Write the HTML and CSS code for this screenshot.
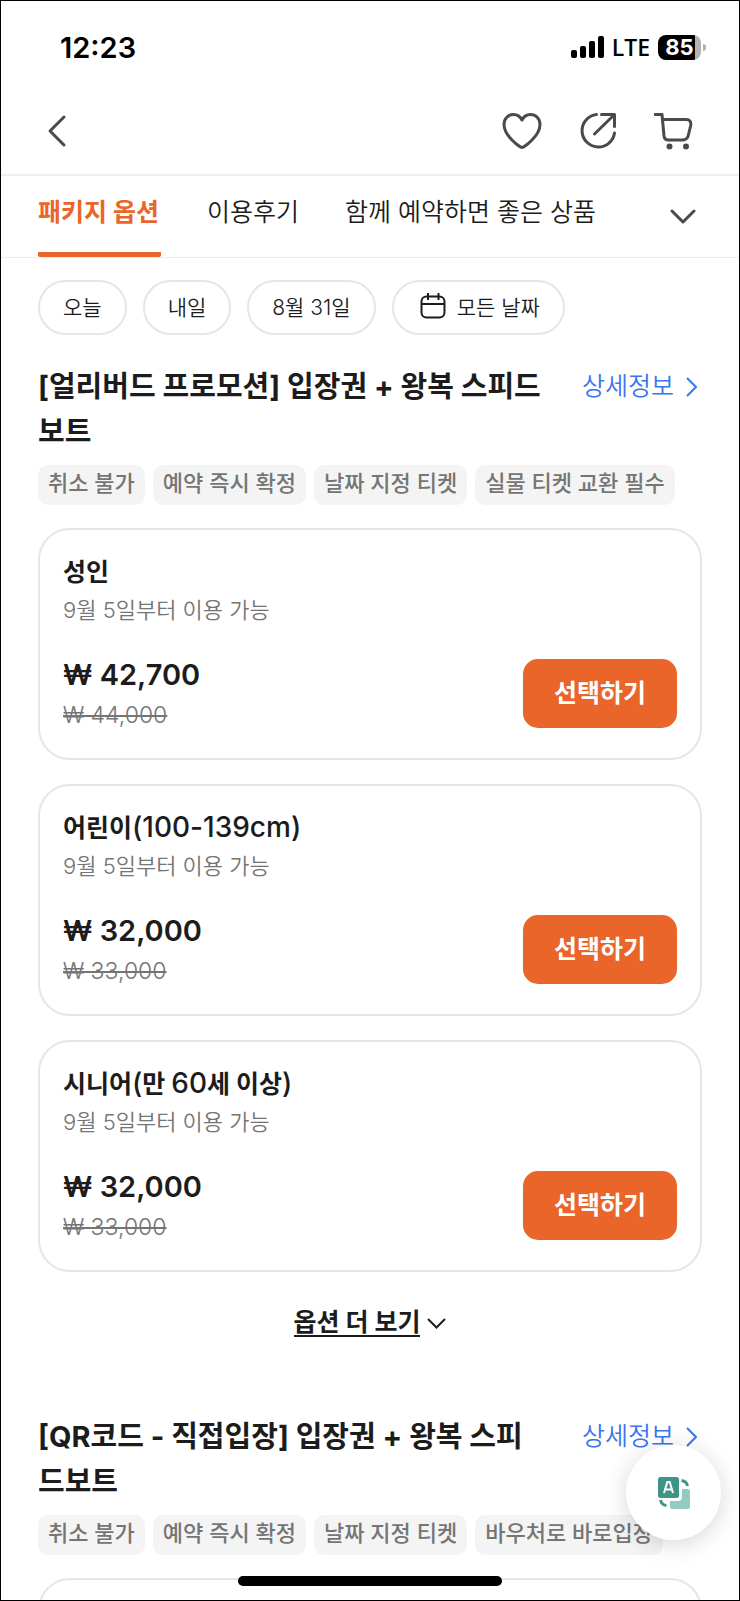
FILE: index.html
```html
<!DOCTYPE html>
<html lang="ko">
<head>
    <meta charset="UTF-8">
    <meta name="viewport" content="width=device-width, initial-scale=1"/>
    <title>패키지 옵션</title>
    <link rel="stylesheet" href="styles.css">
</head>
<body>
<div class="app">
    <div class="status">
        <span class="clock">12:23</span>
        <div class="signals">
            <svg class="bars" width="33" height="22" viewBox="0 0 33 22">
                <rect x="0" y="14" width="6" height="8" rx="2"/>
                <rect x="9" y="10" width="6" height="12" rx="2"/>
                <rect x="18" y="5" width="6" height="17" rx="2"/>
                <rect x="27" y="0" width="6" height="22" rx="2"/>
            </svg>
            <span class="network">LTE</span>
            <span class="battery">85</span>
        </div>
    </div>

    <header class="topbar">
        <button class="icon" aria-label="뒤로">
            <svg width="20" height="34" viewBox="0 0 20 34"><path d="M17 3 3 17l14 14"/></svg>
        </button>
        <div class="actions">
            <button class="icon" aria-label="찜하기">
                <svg width="40" height="38" viewBox="0 0 40 38"><path d="M20 35.500C18 35.500 2 24 2 12.500C2 6.500 6.300 2.500 11.500 2.500C15.500 2.500 18.500 5 20 8C21.500 5 24.500 2.500 28.500 2.500C33.700 2.500 38 6.500 38 12.500C38 24 22 35.500 20 35.500Z"/></svg>
            </button>
            <button class="icon" aria-label="공유">
                <svg width="38" height="38" viewBox="0 0 38 38"><path d="M17.500 2.500A16.300 16.300 0 1 0 35.500 21M22.500 2.500H35.500V14.500M35 3 15.500 22"/></svg>
            </button>
            <button class="icon" aria-label="장바구니">
                <svg width="39" height="38" viewBox="0 0 39 38"><path d="M1 2.500H8L10 24Q10.500 28 14.500 28H28.500Q32.500 28 34 24.500L36.600 14Q37.800 7.500 32 7.500H8.500"/><circle class="wheel" cx="15.500" cy="34.500" r="3"/><circle class="wheel" cx="32" cy="34.500" r="3"/></svg>
            </button>
        </div>
    </header>

    <nav class="tabs">
        <a class="tab active" href="#options">패키지 옵션</a>
        <a class="tab" href="#reviews">이용후기</a>
        <a class="tab" href="#related">함께 예약하면 좋은 상품</a>
        <button class="icon more-tabs" aria-label="펼치기">
            <svg width="26" height="16" viewBox="0 0 26 16"><path d="M2 2 13 13 24 2"/></svg>
        </button>
    </nav>

    <main id="options">
        <div class="chips">
            <button class="chip">오늘</button>
            <button class="chip">내일</button>
            <button class="chip">8월 31일</button>
            <button class="chip">
                <svg width="26" height="26" viewBox="0 0 26 26"><rect x="1.500" y="3.500" width="23" height="21" rx="5"/><path d="M1.500 11H24.500M8 0V7M18.500 0V7"/></svg>
                모든 날짜
            </button>
        </div>

        <section class="package">
            <div class="heading">
                <h2>[얼리버드 프로모션] 입장권 + 왕복 스피드보트</h2>
                <a class="detail" href="#detail">상세정보
                    <svg width="11" height="20" viewBox="0 0 11 20"><path d="M1 1 10 10 1 19"/></svg>
                </a>
            </div>
            <ul class="tags">
                <li>취소 불가</li>
                <li>예약 즉시 확정</li>
                <li>날짜 지정 티켓</li>
                <li>실물 티켓 교환 필수</li>
            </ul>
            <div class="cards">
                <article class="card">
                    <h3>성인</h3>
                    <p class="when">9월 5일부터 이용 가능</p>
                    <div class="buy">
                        <div>
                            <p class="price">₩ 42,700</p>
                            <del>₩ 44,000</del>
                        </div>
                        <button class="select">선택하기</button>
                    </div>
                </article>
                <article class="card">
                    <h3>어린이<span class="latin">(100-139cm)</span></h3>
                    <p class="when">9월 5일부터 이용 가능</p>
                    <div class="buy">
                        <div>
                            <p class="price">₩ 32,000</p>
                            <del>₩ 33,000</del>
                        </div>
                        <button class="select">선택하기</button>
                    </div>
                </article>
                <article class="card">
                    <h3>시니어<span class="latin">(</span>만 <span class="latin">60</span>세 이상<span class="latin">)</span></h3>
                    <p class="when">9월 5일부터 이용 가능</p>
                    <div class="buy">
                        <div>
                            <p class="price">₩ 32,000</p>
                            <del>₩ 33,000</del>
                        </div>
                        <button class="select">선택하기</button>
                    </div>
                </article>
            </div>
            <button class="more">
                <span>옵션 더 보기</span>
                <svg width="19" height="11" viewBox="0 0 19 11"><path d="M1 1 9.500 9.500 18 1"/></svg>
            </button>
        </section>

        <section class="package">
            <div class="heading">
                <h2>[QR코드 - 직접입장] 입장권 + 왕복 스피드보트</h2>
                <a class="detail" href="#detail">상세정보
                    <svg width="11" height="20" viewBox="0 0 11 20"><path d="M1 1 10 10 1 19"/></svg>
                </a>
            </div>
            <ul class="tags">
                <li>취소 불가</li>
                <li>예약 즉시 확정</li>
                <li>날짜 지정 티켓</li>
                <li>바우처로 바로입장</li>
            </ul>
            <div class="cards">
                <article class="card"></article>
            </div>
        </section>
    </main>

    <button class="translate" aria-label="번역">
        <svg width="32" height="32" viewBox="0 0 32 32">
            <path class="sheet" d="M24 12H29.500Q32 12 32 14.500V29.500Q32 32 29.500 32H14.500Q12 32 12 29.500V24H20Q24 24 24 20Z"/>
            <rect class="page" x="0" y="0" width="21" height="21" rx="2.500"/>
            <path class="letter" d="M6 16 9.300 5H11.700L15 16M7.500 12.500H13.500"/>
            <path class="turn" d="M23.500 3.500Q28.500 4 29.500 9M2.500 23Q3.500 28 8.500 28.500"/>
        </svg>
    </button>
    <div class="home"></div>
</div>
</body>
</html>
```
FILE: styles.css
```css
* {
    box-sizing: border-box;
    margin: 0;
    padding: 0;
}

body {
    background-color: white;
    color: #1c1c1c;
    font-family: Inter, "Noto Sans CJK KR", sans-serif;
}

button {
    border: none;
    background: none;
    color: inherit;
    font: inherit;
    cursor: pointer;
}

a {
    color: inherit;
    text-decoration: none;
}

svg {
    display: block;
    flex: none;
    fill: none;
    stroke: currentColor;
}

.app {
    position: relative;
    display: flex;
    flex-direction: column;
    height: 100vh;
    overflow: hidden;
    border: 1px solid black;
}

main {
    flex: 1;
    min-height: 0;
    overflow: hidden;
}

/* status bar */
.status {
    display: flex;
    flex: none;
    justify-content: space-between;
    align-items: center;
    height: 92px;
    padding: 0 33px 0 59px;
    color: black;
}

.clock {
    font-size: 29px;
    font-weight: 600;
}

.signals {
    display: flex;
    align-items: center;
    gap: 8px;
}

.bars {
    fill: black;
    stroke: none;
}

.network {
    font-family: "Open Sans", sans-serif;
    font-size: 23px;
    font-weight: 600;
}

.battery {
    position: relative;
    width: 43px;
    margin-right: 5px;
    border-radius: 8px;
    background: linear-gradient(to right, black 85%, #b3b3b3 85%);
    color: white;
    font-size: 22px;
    font-weight: 700;
    line-height: 25px;
    text-align: center;
}

.battery::after {
    content: "";
    position: absolute;
    top: 9px;
    right: -5px;
    width: 3px;
    height: 7px;
    border-radius: 0 3px 3px 0;
    background-color: #b3b3b3;
}

/* navigation */
.topbar {
    display: flex;
    flex: none;
    justify-content: space-between;
    align-items: center;
    height: 83px;
    padding: 0 46px 6px;
    border-bottom: 2px solid #efefef;
}

.icon {
    color: #4a4a4a;
    stroke-width: 3;
    stroke-linecap: round;
    stroke-linejoin: round;
}

.actions {
    display: flex;
    gap: 37px;
}

.wheel {
    fill: currentColor;
    stroke: none;
}

.tabs {
    display: flex;
    flex: none;
    align-items: stretch;
    gap: 46px;
    height: 82px;
    padding: 0 43px 0 37px;
    border-bottom: 1px solid #ededed;
    font-size: 25px;
    font-weight: 350;
    line-height: 72px;
    white-space: nowrap;
}

.tab.active {
    padding-right: 2px;
    border-bottom: 5px solid #ea652a;
    border-radius: 2px;
    color: #ea652a;
    font-weight: 700;
}

.more-tabs {
    margin-left: auto;
}

/* date filter */
.chips {
    display: flex;
    gap: 16px;
    padding: 22px 37px 29px;
}

.chip {
    display: flex;
    align-items: center;
    gap: 11px;
    height: 55px;
    padding: 0 23px 3px;
    border: 2px solid #e6e6e6;
    border-radius: 28px;
    font-size: 21px;
    font-weight: 350;
    white-space: nowrap;
}

.chip svg {
    margin-left: 3px;
    stroke-width: 2;
}

/* packages */
.package {
    padding: 0 37px;
}

.heading {
    display: flex;
    gap: 34px;
    align-items: flex-start;
}

.heading h2 {
    flex: 1;
    font-size: 29px;
    font-weight: 700;
    line-height: 45px;
    word-break: break-all;
}

.detail {
    display: flex;
    align-items: center;
    gap: 12px;
    padding-right: 5px;
    color: #3b75f0;
    font-size: 25px;
    font-weight: 350;
    line-height: 45px;
    white-space: nowrap;
    stroke-width: 2;
}

.tags {
    display: flex;
    gap: 8px;
    margin: 11px 0 23px;
    list-style: none;
    white-space: nowrap;
}

.tags li {
    padding: 0 10px 3px;
    border-radius: 10px;
    background-color: #f4f4f4;
    color: #757575;
    font-size: 22px;
    font-weight: 500;
    line-height: 37px;
}

.cards {
    display: flex;
    flex-direction: column;
    gap: 24px;
}

.card {
    min-height: 232px;
    padding: 22px 23px;
    border: 2px solid #e6e6e6;
    border-radius: 32px;
}

.card h3 {
    font-size: 25px;
    font-weight: 700;
    line-height: 40px;
}

.latin {
    font-size: 28px;
    font-weight: 500;
    line-height: 30px;
}

.when {
    color: #757575;
    font-size: 22px;
    font-weight: 350;
    line-height: 36px;
}

.buy {
    display: flex;
    justify-content: space-between;
    align-items: center;
    margin-top: 25px;
}

.price {
    font-size: 29px;
    font-weight: 600;
    line-height: 44px;
}

.buy del {
    display: block;
    color: #757575;
    font-size: 23px;
    font-weight: 350;
    line-height: 36px;
}

.select {
    height: 69px;
    padding: 0 31px 4px;
    border-radius: 15px;
    background-color: #ea652a;
    color: white;
    font-size: 25px;
    font-weight: 700;
}

.more {
    display: flex;
    align-items: center;
    gap: 7px;
    margin: 37px auto 77px;
    font-size: 25px;
    font-weight: 700;
    line-height: 26px;
    stroke-width: 2;
}

.more span {
    border-bottom: 2px solid #1c1c1c;
}

/* floating parts */
.translate {
    position: absolute;
    right: 18px;
    bottom: 60px;
    display: flex;
    align-items: center;
    justify-content: center;
    width: 95px;
    height: 95px;
    border-radius: 50%;
    background-color: white;
    box-shadow: 0 4px 24px rgba(0, 0, 0, 0.16);
}

.sheet {
    fill: #93cbc1;
    stroke: none;
}

.page {
    fill: #3f9488;
    stroke: none;
}

.letter {
    stroke: white;
    stroke-width: 2;
}

.turn {
    stroke: #3f9488;
    stroke-width: 3;
}

.home {
    position: absolute;
    bottom: 14px;
    left: 50%;
    width: 264px;
    height: 10px;
    margin-left: -132px;
    border-radius: 5px;
    background-color: black;
}
```
